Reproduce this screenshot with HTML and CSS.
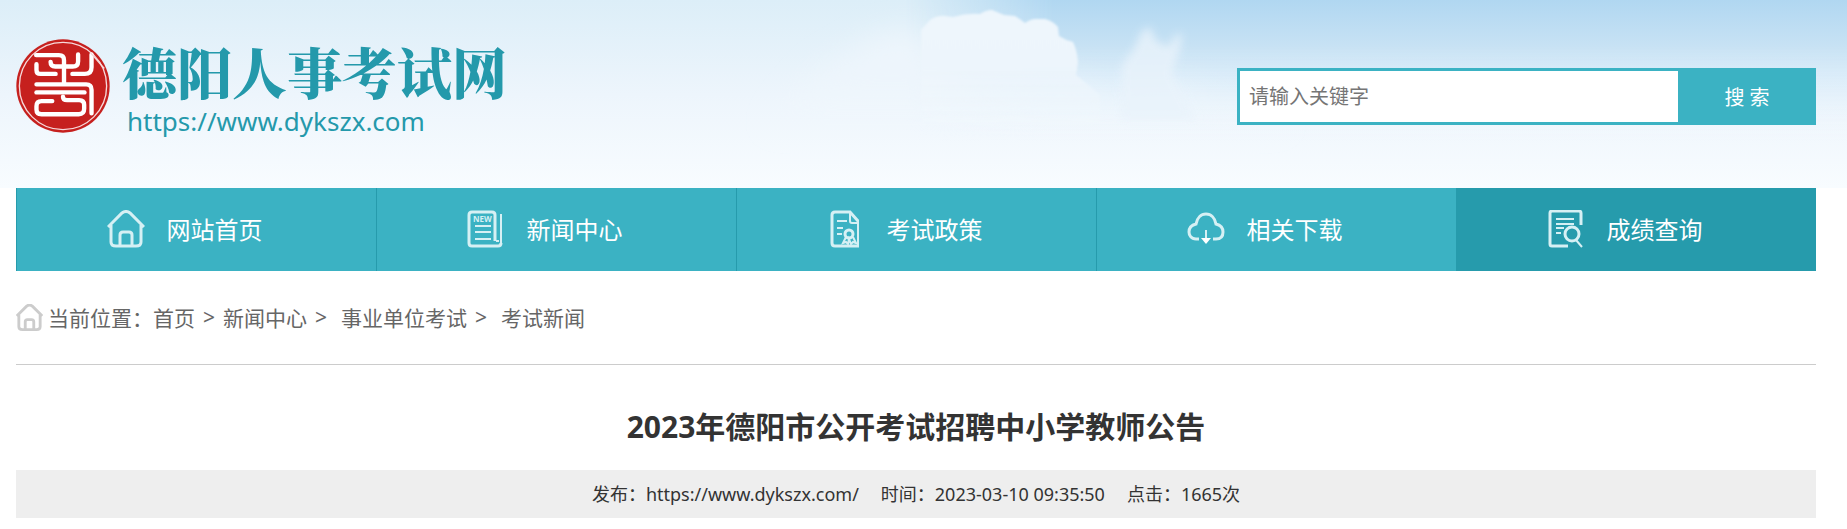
FILE: index.html
```
<!DOCTYPE html>
<html lang="zh-CN">
<head>
  <meta charset="UTF-8">
  <meta name="viewport" content="width=device-width, initial-scale=1.0">
  <title>2023年德阳市公开考试招聘中小学教师公告</title>
  <link rel="stylesheet" href="styles.css">
</head>
<body>

  <header class="header">
    <svg class="sky" viewBox="0 0 1847 188" preserveAspectRatio="none" aria-hidden="true">
      <defs>
        <linearGradient id="blue" x1="0" y1="0" x2="0" y2="1">
          <stop offset="0" stop-color="#b0d7f1"/>
          <stop offset="0.25" stop-color="#c8e2f4"/>
          <stop offset="0.5" stop-color="#e0effa" stop-opacity="0.7"/>
          <stop offset="0.75" stop-color="#f5f9fe" stop-opacity="0"/>
        </linearGradient>
        <linearGradient id="side" x1="0" y1="0" x2="1" y2="0">
          <stop offset="0.49" stop-color="#000"/>
          <stop offset="0.57" stop-color="#fff"/>
        </linearGradient>
        <linearGradient id="cloud" x1="0" y1="0" x2="0" y2="130" gradientUnits="userSpaceOnUse">
          <stop offset="0" stop-color="#eef6fc"/>
          <stop offset="0.5" stop-color="#edf5fc"/>
          <stop offset="1" stop-color="#f3f9fd" stop-opacity="0"/>
        </linearGradient>
        <mask id="fade"><rect width="1847" height="188" fill="url(#side)"/></mask>
        <filter id="soft"><feGaussianBlur stdDeviation="1"/></filter>
        <filter id="softer" x="-50%" y="-50%" width="200%" height="200%"><feGaussianBlur stdDeviation="4"/></filter>
        <filter id="haze" x="-50%" y="-50%" width="200%" height="200%"><feGaussianBlur stdDeviation="14"/></filter>
      </defs>
      <rect width="1847" height="188" fill="url(#blue)" mask="url(#fade)"/>
      <path d="M760 130l60-60 60-35 40-5 30 60 120-10 60 15 50-10 70 20 50 25z" fill="url(#cloud)" filter="url(#haze)"/>
      <path d="M921 130V30l9-10q8-5 15-4l8 1q14-4 27-3 6-4 12-4l12 5 11 1q5 3 10 7 6-4 10-4h10q8 2 13 8l1 9q6 4 14 6 4 8 5 20-1 8-2 13 12 10 24 20v35z" fill="url(#cloud)" filter="url(#soft)"/>
      <path d="M1120 120l2-55 12-16 8-18 8-4 6 14 12 6 8-12 6-2-2 16-8 24 10 20 14 27z" fill="#e9f3fb" opacity="0.8" filter="url(#softer)"/>
    </svg>
    <div class="container header-inner">
      <a class="logo" href="#">
        <svg class="seal" viewBox="47 58 280 280" aria-hidden="true">
          <circle cx="187" cy="198" r="139" fill="#c6201e"/>
          <circle cx="187" cy="198" r="130" fill="none" stroke="#f6d9da" stroke-width="4"/>
          <g fill="none" stroke="#fff" stroke-width="13" stroke-linecap="round" stroke-linejoin="round">
            <path d="M107 106h68q15 0 15 15v70"/>
            <path d="M108 133v17q0 12 12 12h45"/>
            <path d="M150 126q0 14 14 14h52q16 0 16-16v-20"/>
            <path d="M272 104v38q0 20-20 20h-37"/>
            <path d="M108 193h148q16 0 16 16v70"/>
            <path d="M108 217h143"/>
            <path d="M155 243h-32q-15 0-15 15v10q0 14 15 14h111q16 0 16-16v-12q0-14-15-14h-36q-12 0-12-10"/>
          </g>
          <path d="M268 98l42 48" stroke="#f6d9da" stroke-width="4"/>
        </svg>
        <span class="logo-text">
          <span class="site-name">德阳人事考试网</span>
          <span class="site-url">https://www.dykszx.com</span>
        </span>
      </a>
      <form class="search">
        <input type="text" name="keyword" placeholder="请输入关键字" aria-label="请输入关键字">
        <button type="submit">搜 索</button>
      </form>
    </div>
  </header>

  <div class="container">
    <nav class="nav">
      <a href="#">
        <svg viewBox="0 0 38 38"><path d="M1 17L15 3q4-3 8 0l14 14M4 15v17q0 4 5 4h20q5 0 5-4V15M13 36V25q0-3 3-3h6q3 0 3 3v11"/></svg>
        网站首页
      </a>
      <a href="#">
        <svg viewBox="0 0 38 38"><path d="M28 31V5q0-3-3-3H5Q2 2 2 5v28q0 3 3 3h26q3 0 3-3"/><path class="thin" d="M34 4v29M29 31h3M8 16h16M8 22h16M8 29h16"/><text x="6" y="12">NEW</text></svg>
        新闻中心
      </a>
      <a href="#">
        <svg viewBox="0 0 38 38"><path d="M32 36H8q-3 0-3-3V5q0-3 3-3h15l8 9"/><path class="thin" d="M31 10v27M23 2v9q0 2 2 2h6M10 11h10M10 18h6M10 24h5"/><circle cx="22" cy="24" r="4"/><path class="thin" d="M19 27l-3 6 3-1 2 2 1-5 2 5 2-2 3 1-3-6"/></svg>
        考试政策
      </a>
      <a href="#">
        <svg viewBox="0 0 38 38"><path d="M12 29H9C4 29 2 25 2 22c0-4 3-7 7-8 1-6 5-10 10-10s9 4 10 10c4 1 7 4 7 8s-2 7-7 7h-3"/><path class="thin" d="M19 20v11"/><path class="solid" d="M14 28l5 6 5-6z"/></svg>
        相关下载
      </a>
      <a class="active" href="#">
        <svg viewBox="0 0 38 38"><path d="M21 36H5q-2 0-2-2V3q0-2 2-2h27q2 0 2 2v12"/><path class="thin" d="M9 9h18M9 14h18M9 18h8M9 23h5M29 30l6 7"/><circle cx="25" cy="24" r="7"/></svg>
        成绩查询
      </a>
    </nav>

    <div class="position">
      <svg viewBox="0 0 38 38"><path d="M1 17L15 3q4-3 8 0l14 14M4 15v17q0 4 5 4h20q5 0 5-4V15M13 36V25q0-3 3-3h6q3 0 3 3v11"/></svg>
      <span>当前位置：</span>
      <a href="#">首页</a>
      <span class="sep">&gt;</span>
      <a href="#">新闻中心</a>
      <span class="sep wide">&gt;</span>
      <a href="#">事业单位考试</a>
      <span class="sep wide">&gt;</span>
      <a href="#">考试新闻</a>
    </div>

    <main class="article">
      <h1>2023年德阳市公开考试招聘中小学教师公告</h1>
      <div class="info">
        <span>发布：<a href="#">https://www.dykszx.com/</a></span>
        <span>时间：2023-03-10 09:35:50</span>
        <span>点击：1665次</span>
      </div>
    </main>
  </div>

</body>
</html>
```

FILE: styles.css
```
* {
  box-sizing: border-box;
}

body {
  margin: 0;
  font-family: "Noto Sans", "Noto Sans CJK SC", sans-serif;
  font-size: 18px;
  color: #333;
  background-color: #fff;
}

a {
  color: inherit;
  text-decoration: none;
}

.container {
  padding: 0 31px 0 16px;
}

/* header */
.header {
  position: relative;
  background: linear-gradient(#dceef8, #edf5fc 50%, #f8fcff);
}

.sky {
  position: absolute;
  left: 0;
  top: 0;
  width: 100%;
  height: 100%;
}

.header-inner {
  position: relative;
  display: flex;
  justify-content: space-between;
  align-items: flex-start;
  min-height: 188px;
}

.logo {
  display: flex;
  align-items: center;
  gap: 12px;
  padding-top: 36px;
  color: #2499ab;
}

.seal {
  width: 94px;
  height: 94px;
}

.logo-text {
  display: flex;
  flex-direction: column;
}

.site-name {
  font-family: "Noto Serif CJK SC", "Noto Sans CJK SC", serif;
  font-size: 55px;
  font-weight: 900;
  line-height: 70px;
}

.site-url {
  padding-left: 5px;
  font-size: 26px;
  line-height: 30px;
}

.search {
  display: flex;
  width: 579px;
  height: 57px;
  margin-top: 68px;
  border: 3px solid #3bb2c3;
  border-right: none;
}

.search input {
  flex: 1;
  min-width: 0;
  padding: 0 9px;
  border: none;
  outline: none;
  font-family: inherit;
  font-size: 20px;
  background-color: #fff;
}

.search input::placeholder {
  color: #757575;
}

.search button {
  width: 138px;
  border: none;
  font-family: inherit;
  font-size: 20px;
  color: #fff;
  background-color: #3bb2c3;
  cursor: pointer;
}

/* nav */
.nav {
  display: flex;
  background-color: #3bb2c3;
}

.nav a {
  flex: 1;
  display: flex;
  justify-content: center;
  align-items: center;
  gap: 22px;
  height: 83px;
  padding: 0 24px 2px 0;
  border-left: 1px solid #269bac;
  font-size: 24px;
  color: #fff;
}

.nav a:hover,
.nav .active {
  background-color: #269bac;
}

.nav svg {
  width: 38px;
  height: 38px;
  fill: none;
  stroke: #d6f0f4;
  stroke-width: 3;
}

.nav .thin {
  stroke-width: 2;
}

.nav text {
  font-size: 8px;
  font-weight: bold;
  fill: #d6f0f4;
  stroke: none;
}

.nav .solid {
  fill: #fff;
  stroke: none;
}

/* position */
.position {
  display: flex;
  align-items: center;
  height: 94px;
  padding-bottom: 1px;
  border-bottom: 1px solid #ccc;
  font-size: 21px;
  color: #666;
}

.position svg {
  width: 27px;
  height: 27px;
  margin-right: 5px;
  fill: none;
  stroke: #ccc;
  stroke-width: 4;
}

.position .sep {
  margin: 0 8px;
}

.position .wide {
  margin-right: 14px;
}

/* article */
.article h1 {
  margin: 0;
  padding: 32px 0 13px;
  font-size: 30px;
  line-height: 60px;
  text-align: center;
}

.info {
  display: flex;
  justify-content: center;
  gap: 22px;
  line-height: 48px;
  background-color: #eee;
}
```
